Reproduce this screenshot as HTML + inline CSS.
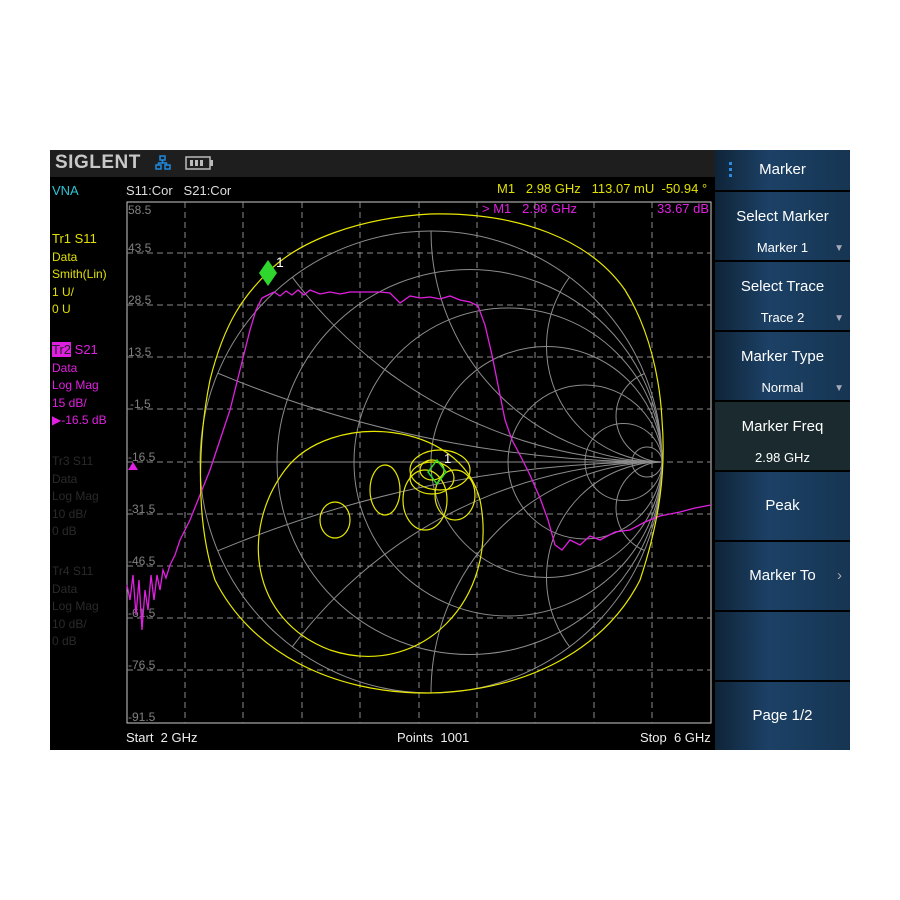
<!DOCTYPE html>
<html style="overflow:hidden"><head><meta charset="utf-8"><style>
html,body{margin:0;width:900px;height:900px;overflow:hidden}
body{background:#fff;position:relative;font-family:"Liberation Sans",sans-serif}
#scr{position:absolute;left:50px;top:150px;width:800px;height:600px;background:#000;overflow:hidden}
.t{position:absolute;font-size:13px;white-space:nowrap}
.btn{position:absolute;left:665px;width:135px;background:linear-gradient(90deg,#0f2438,#1c4166 40%,#163552);color:#fff;text-align:center;font-size:15px}
.btn .s{position:absolute;left:0;right:0;font-size:13px}
.tri{position:absolute;right:6px;font-size:10px;color:#aab}
</style></head><body>
<div id="scr">
<div style="position:absolute;left:0;top:0;width:665px;height:27px;background:#1e1e1e"></div>
<div class="t" style="left:5px;top:2px;font-size:19px;font-weight:bold;color:#c8c8c8;letter-spacing:0.5px">SIGLENT</div>
<svg style="position:absolute;left:105px;top:5px" width="16" height="16"><g fill="none" stroke="#1e8ae0" stroke-width="1.5"><rect x="5" y="1" width="5" height="4"/><rect x="1" y="10" width="5" height="4"/><rect x="10" y="10" width="5" height="4"/><path d="M7.5 5v3M3.5 10V8h8v2"/></g></svg>
<svg style="position:absolute;left:135px;top:5px" width="30" height="16"><rect x="1" y="2" width="24" height="12" fill="none" stroke="#bbb" stroke-width="1.5"/><rect x="25" y="5" width="3" height="6" fill="#bbb"/><rect x="5" y="5" width="3" height="6" fill="#bbb"/><rect x="10" y="5" width="3" height="6" fill="#bbb"/><rect x="15" y="5" width="3" height="6" fill="#bbb"/></svg>
<div class="t" style="left:2px;top:33px;color:#2bc4d4">VNA</div>
<div class="t" style="left:76px;top:33px;color:#ddd">S11:Cor&nbsp;&nbsp;&nbsp;S21:Cor</div>
<div class="t" style="left:447px;top:31px;color:#e0e000">M1&nbsp;&nbsp;&nbsp;2.98 GHz&nbsp;&nbsp;&nbsp;113.07 mU&nbsp;&nbsp;-50.94 °</div>
<div class="t" style="left:432px;top:51px;color:#e020e0">&gt; M1&nbsp;&nbsp;&nbsp;2.98 GHz</div>
<div class="t" style="left:607px;top:51px;color:#e020e0">33.67 dB</div>
<div class="t" style="left:2px;top:80px;color:#e0e000;line-height:17.5px;font-size:12px"><span style="font-size:13px">Tr1 S11</span><br>Data<br>Smith(Lin)<br>1 U/<br>0 U</div>
<div class="t" style="left:2px;top:191px;color:#e020e0;line-height:17.5px;font-size:12px"><span style="font-size:13px"><span style="background:#e020e0;color:#222">Tr2</span> S21</span><br>Data<br>Log Mag<br>15 dB/<br>▶-16.5 dB</div>
<div class="t" style="left:2px;top:303px;color:#2a2a2a;line-height:17.5px;font-size:12px">Tr3 S11<br>Data<br>Log Mag<br>10 dB/<br>0 dB</div>
<div class="t" style="left:2px;top:413px;color:#2a2a2a;line-height:17.5px;font-size:12px">Tr4 S11<br>Data<br>Log Mag<br>10 dB/<br>0 dB</div>
<div class="t" style="left:76px;top:580px;color:#eee">Start&nbsp;&nbsp;2 GHz</div>
<div class="t" style="left:347px;top:580px;color:#eee">Points&nbsp;&nbsp;1001</div>
<div class="t" style="left:590px;top:580px;color:#eee">Stop&nbsp;&nbsp;6 GHz</div>
<svg style="position:absolute;left:0;top:0" width="665" height="600" viewBox="50 150 665 600">
<defs><clipPath id="c"><circle cx="431" cy="462" r="231"/></clipPath></defs>
<rect x="127" y="202" width="584" height="521" fill="none" stroke="#ccc" stroke-width="1"/>
<g stroke="#8a8a8a" stroke-dasharray="6,4" stroke-width="1">
<path d="M127 253H711M127 305H711M127 357H711M127 409H711M127 462H711M127 514H711M127 566H711M127 618H711M127 670H711"/>
<path d="M185 202V723M243 202V723M302 202V723M360 202V723M419 202V723M477 202V723M535 202V723M594 202V723M652 202V723"/>
</g>
<g fill="#808080" font-size="12" font-family="Liberation Sans">
<text x="128" y="214">58.5</text><text x="128" y="252">43.5</text><text x="128" y="304">28.5</text><text x="128" y="356">13.5</text><text x="130" y="408">-1.5</text><text x="128" y="461">-16.5</text><text x="128" y="513">-31.5</text><text x="128" y="565">-46.5</text><text x="128" y="617">-61.5</text><text x="128" y="669">-76.5</text><text x="128" y="721">-91.5</text>
</g>
<g fill="none" stroke="#8c8c8c" stroke-width="1">
<circle cx="431" cy="462" r="231"/>
<circle cx="469.5" cy="462" r="192.5"/><circle cx="508" cy="462" r="154"/><circle cx="546.5" cy="462" r="115.5"/><circle cx="585" cy="462" r="77"/><circle cx="623.5" cy="462" r="38.5"/><circle cx="647" cy="462" r="15"/>
<path d="M200 462H662"/>
<g clip-path="url(#c)">
<circle cx="662" cy="-693" r="1155"/><circle cx="662" cy="1617" r="1155"/>
<circle cx="662" cy="0" r="462"/><circle cx="662" cy="924" r="462"/>
<circle cx="662" cy="231" r="231"/><circle cx="662" cy="693" r="231"/>
<circle cx="662" cy="346.5" r="115.5"/><circle cx="662" cy="577.5" r="115.5"/>
<circle cx="662" cy="416" r="46"/><circle cx="662" cy="508" r="46"/>
</g></g>
<polyline fill="none" stroke="#e020e0" stroke-width="1.3" points="127,585 130,600 133,575 136,615 139,580 142,630 145,590 148,610 151,575 154,600 157,575 160,590 163,570 166,578 170,565 175,555 180,540 185,530 190,520 200,495 210,470 220,440 230,410 240,370 250,330 256,310 262,298 268,295 274,292 280,296 286,291 292,295 298,290 304,295 310,290 320,294 330,292 340,294 350,292 360,292 370,292 380,292 390,293 400,303 410,296 420,298 430,297 440,299 450,296 460,300 470,302 478,306 485,325 492,355 500,395 505,420 512,440 520,455 530,475 540,498 548,520 555,545 562,550 570,540 580,545 590,536 600,540 615,532 630,530 645,522 660,516 680,512 695,508 711,505"/>
<g fill="none" stroke="#e8e800" stroke-width="1.2">
<path d="M268 272 C300 240 360 218 430 214 C520 212 590 240 625 290 C650 330 660 380 662 420 C666 470 660 520 640 580 C610 640 540 690 430 693 C330 694 250 650 215 580 C195 520 198 440 210 380 C225 320 245 295 268 272 Z"/>
<path d="M480 500 C460 420 330 410 285 470 C240 530 250 620 330 650 C420 680 500 600 480 500"/>
<ellipse cx="335" cy="520" rx="15" ry="18"/>
<ellipse cx="385" cy="490" rx="15" ry="25"/>
<ellipse cx="432" cy="478" rx="22" ry="16"/>
<ellipse cx="440" cy="470" rx="30" ry="20"/>
<ellipse cx="425" cy="500" rx="22" ry="30"/>
<ellipse cx="455" cy="495" rx="20" ry="25"/>
<ellipse cx="432" cy="470" rx="12" ry="10"/>
</g>
<polygon points="268,260 277,273 268,286 259,273" fill="#2ed62e"/>
<text x="276" y="267" fill="#fff" font-size="14" font-family="Liberation Sans">1</text>
<polygon points="437,460 446,472 437,484 428,472" fill="none" stroke="#2ed62e" stroke-width="1.5"/>
<text x="444" y="463" fill="#fff" font-size="13" font-family="Liberation Sans">1</text>
<polygon points="128,470 133,462 138,470" fill="#e020e0"/>
</svg>
<div class="btn" style="top:0;height:40px;line-height:40px">Marker<div style="position:absolute;left:14px;top:12px;width:3px;height:16px;background:repeating-linear-gradient(#2a8ae0 0 3px,transparent 3px 6px)"></div></div>
<div class="btn" style="top:42px;height:68px"><div class="s" style="top:16px;font-size:15px">Select Marker</div><div class="s" style="top:48px">Marker 1</div><span class="tri" style="top:51px">▼</span></div>
<div class="btn" style="top:112px;height:68px"><div class="s" style="top:16px;font-size:15px">Select Trace</div><div class="s" style="top:48px">Trace 2</div><span class="tri" style="top:51px">▼</span></div>
<div class="btn" style="top:182px;height:68px"><div class="s" style="top:16px;font-size:15px">Marker Type</div><div class="s" style="top:48px">Normal</div><span class="tri" style="top:51px">▼</span></div>
<div class="btn" style="top:252px;height:68px;background:#1a2a2e"><div class="s" style="top:16px;font-size:15px">Marker Freq</div><div class="s" style="top:48px">2.98 GHz</div></div>
<div class="btn" style="top:322px;height:68px;line-height:68px">Peak</div>
<div class="btn" style="top:392px;height:68px;line-height:68px">Marker To<span style="position:absolute;right:8px;color:#aab">›</span></div>
<div class="btn" style="top:462px;height:68px"></div>
<div class="btn" style="top:532px;height:68px;line-height:68px">Page 1/2</div>
</div>
</body></html>
